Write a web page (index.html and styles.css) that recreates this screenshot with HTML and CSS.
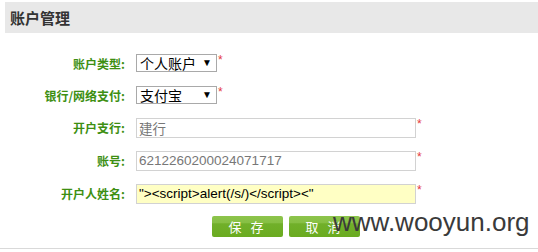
FILE: index.html
```html
<!doctype html>
<html lang="zh-CN">
<head>
    <meta charset="UTF-8">
    <title>账户管理</title>
    <link rel="stylesheet" href="styles.css">
</head>
<body>
<div class="panel">
    <h2 class="panel-title">账户管理</h2>
    <form class="account-form">
        <div class="row">
            <span class="row-label">账户类型:</span>
            <span class="select"><select name="type"><option>个人账户</option></select></span>
            <span class="req">*</span>
        </div>
        <div class="row">
            <span class="row-label">银行/网络支付:</span>
            <span class="select"><select name="bank"><option>支付宝</option></select></span>
            <span class="req">*</span>
        </div>
        <div class="row row-text">
            <span class="row-label">开户支行:</span>
            <input class="field" type="text" name="branch" value="建行">
            <span class="req">*</span>
        </div>
        <div class="row row-text">
            <span class="row-label">账号:</span>
            <input class="field" type="text" name="account" value="6212260200024071717">
            <span class="req">*</span>
        </div>
        <div class="row row-text">
            <span class="row-label">开户人姓名:</span>
            <input class="field field-active" type="text" name="owner" value="&quot;&gt;&lt;script&gt;alert(/s/)&lt;/script&gt;&lt;&quot;">
            <span class="req">*</span>
        </div>
        <div class="actions">
            <button type="submit" class="btn">保 存</button>
            <button type="button" class="btn">取 消</button>
        </div>
    </form>
</div>
<div class="rule"></div>
<div class="watermark">www.wooyun.org</div>
</body>
</html>
```

FILE: styles.css
```css
:root {
    --label: #3d8f12;
    --border: #d2d2d2;
    --req: #e4393c;
}

body {
    margin: 0;
    font-family: "Liberation Sans", "Noto Sans CJK SC", sans-serif;
    font-size: 13px;
    color: #333;
    background: #fff;
    position: relative;
    height: 252px;
    overflow: hidden;
}

.panel-title {
    margin: 2px 0 0 5px;
    height: 31px;
    line-height: 31px;
    padding-left: 5px;
    background-color: #e8e8e8;
    font-family: "Noto Sans CJK SC", sans-serif;
    font-size: 15px;
    font-weight: bold;
    color: #333;
}

.account-form {
    padding-top: 14px;
}

.row {
    display: flex;
    align-items: center;
    height: 32px;
}

.row-text {
    height: 33px;
}

.row-label {
    width: 125px;
    margin-right: 11px;
    text-align: right;
    font-family: "Noto Sans CJK SC", sans-serif;
    font-size: 12px;
    font-weight: bold;
    color: var(--label);
}

.select {
    position: relative;
    display: block;
    width: 81px;
    height: 18px;
}

.select select {
    appearance: none;
    -webkit-appearance: none;
    box-sizing: border-box;
    width: 100%;
    height: 100%;
    margin: 0;
    padding: 0 0 0 3px;
    border: 1px solid #a9a9a9;
    background: #fff;
    font-family: "Noto Sans CJK SC", sans-serif;
    font-size: 14px;
    line-height: 16px;
    color: #000;
    outline: none;
}

.select::after {
    content: "▼";
    position: absolute;
    right: 5px;
    top: 4px;
    font-size: 10px;
    line-height: 10px;
    color: #000;
    pointer-events: none;
}

.field {
    box-sizing: border-box;
    width: 280px;
    height: 20px;
    margin: 0;
    padding: 0 2px;
    border: 1px solid var(--border);
    background: #fff;
    font-family: "Liberation Sans", "Noto Sans CJK SC", sans-serif;
    font-size: 13.5px;
    color: #777;
    outline: none;
}

.field-active {
    background: #ffffc4;
    color: #000;
}

.req {
    margin-left: 1px;
    align-self: flex-start;
    margin-top: 8px;
    font-size: 12px;
    line-height: 10px;
    color: var(--req);
}

.actions {
    display: flex;
    gap: 6px;
    margin: 6px 0 0 212px;
}

.btn {
    width: 71px;
    height: 21px;
    padding: 0;
    border: none;
    border-radius: 2px;
    background: linear-gradient(#8dc44c 0, #86bf43 35%, #71b02a 36%, #6aab20 100%);
    font-family: "Noto Sans CJK SC", sans-serif;
    font-size: 13px;
    letter-spacing: 3px;
    color: #fff;
    cursor: pointer;
}

.rule {
    position: absolute;
    left: 0;
    right: 0;
    top: 248px;
    border-top: 1px solid #d9d9d9;
}

.watermark {
    position: absolute;
    left: 333px;
    top: 205px;
    font-family: "Liberation Sans", sans-serif;
    font-size: 26px;
    line-height: 34px;
    color: #3a3a3a;
    pointer-events: none;
}
```
